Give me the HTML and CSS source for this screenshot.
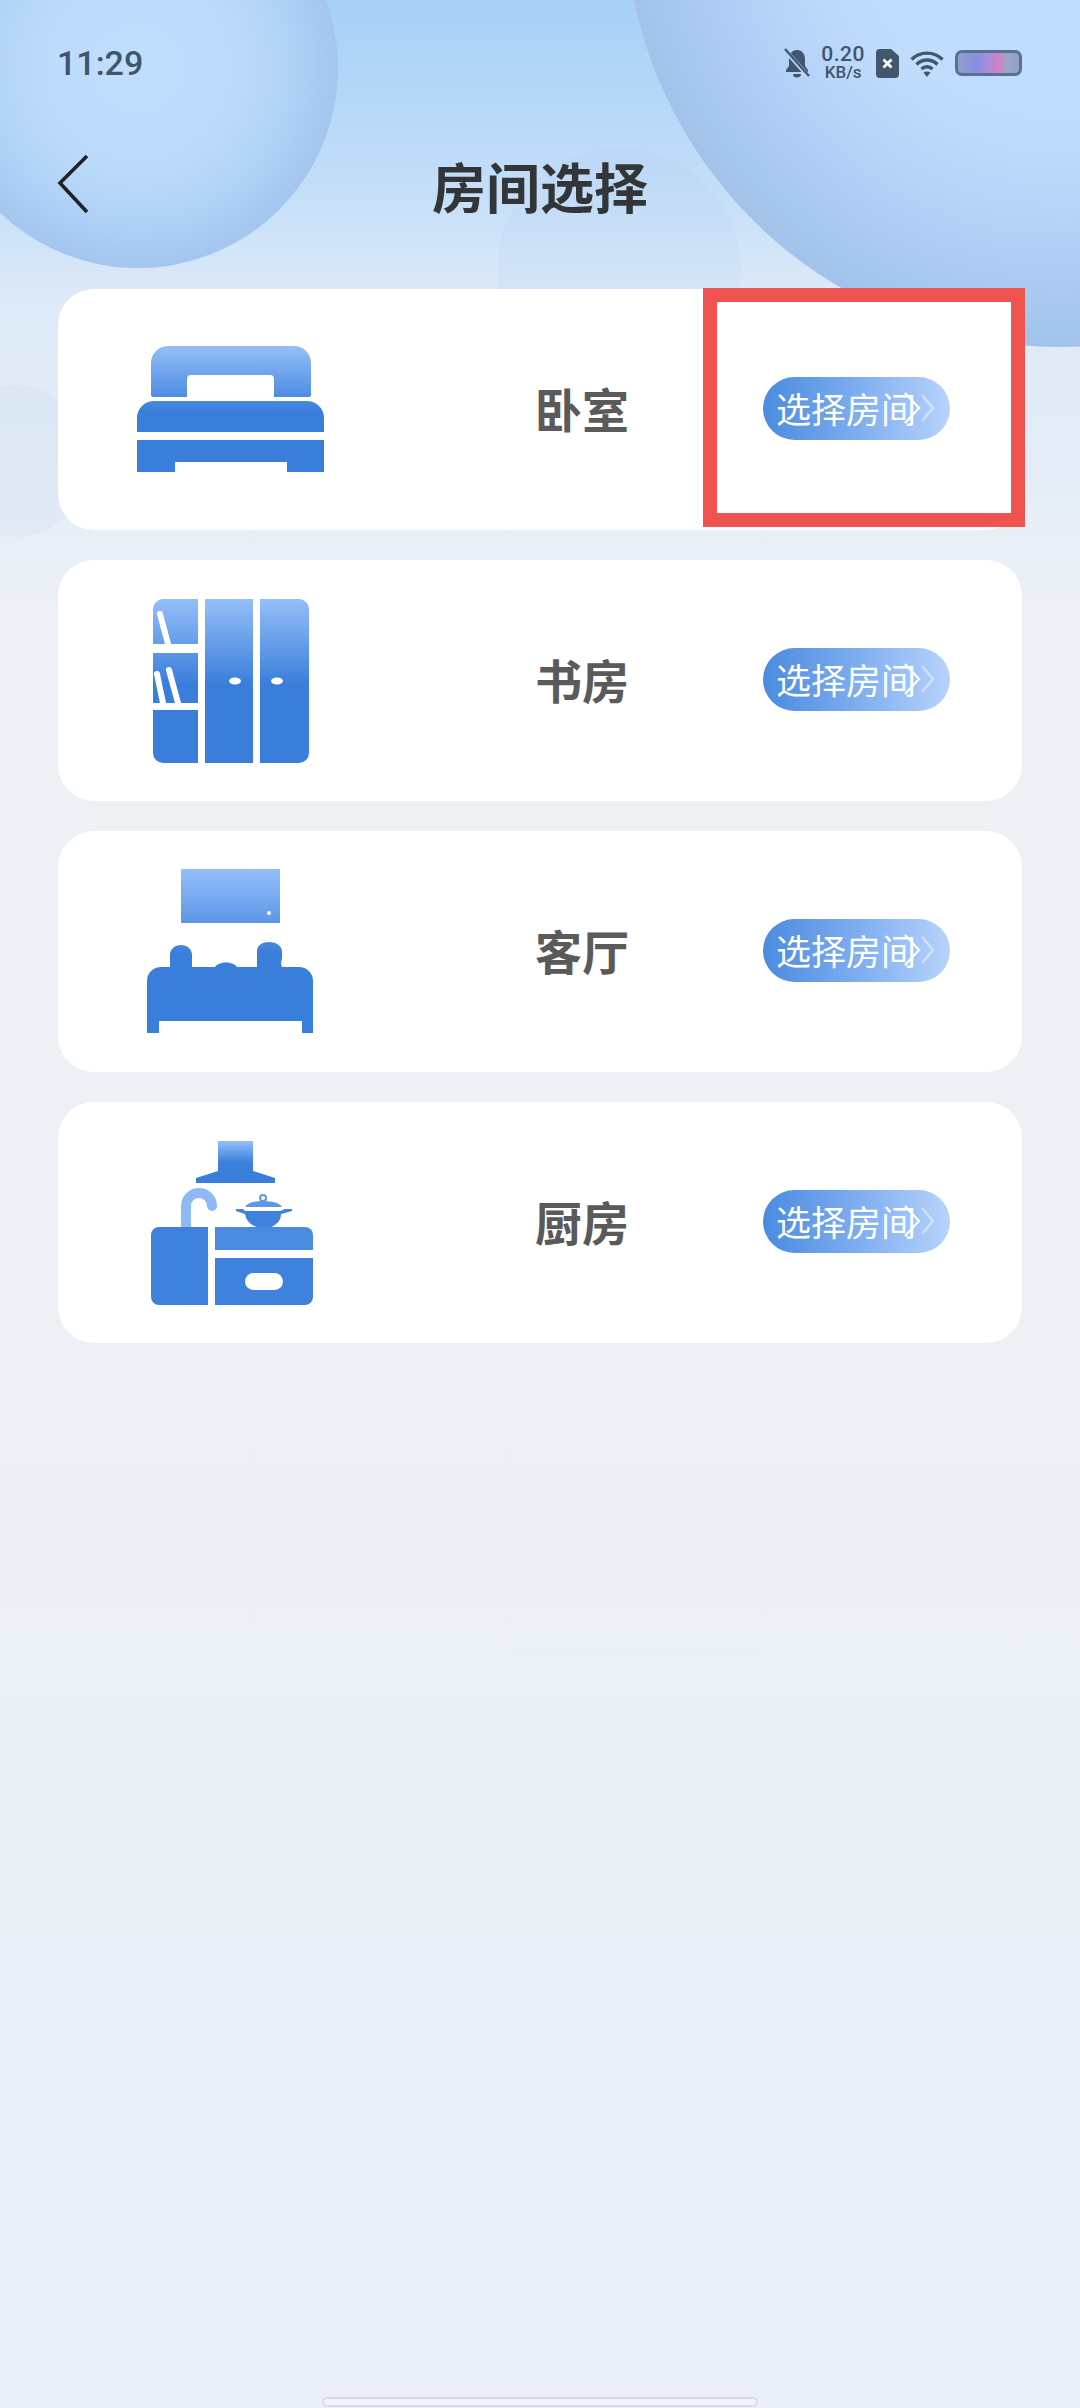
FILE: index.html
```html
<!DOCTYPE html>
<html lang="zh-CN">
<head>
  <meta charset="UTF-8">
  <title>房间选择</title>
  <link rel="stylesheet" href="styles.css">
</head>
<body>
  <div class="phone">
    <div class="bubble bubble-left"></div>
    <div class="bubble bubble-right"></div>
    <div class="bubble bubble-mid"></div>
    <div class="bubble bubble-low"></div>

    <!-- status bar -->
    <div class="status">
      <span class="time">11:29</span>
      <div class="status-icons">
        <svg class="bell" width="27" height="30" viewBox="0 0 27 30">
          <path d="M14 2c-5 0-8 4-8 9v7l-3 4v2h22v-2l-3-4v-7c0-5-3-9-8-9zM10 26a4 3.500 0 0 0 8 0z" fill="#42566e"/>
          <path d="M1 1l25 28" stroke="#b5d3f8" stroke-width="4.500"/>
          <path d="M2 1l24 27" stroke="#42566e" stroke-width="2.400"/>
        </svg>
        <div class="speed"><span class="speed-num">0.20</span><span class="speed-unit">KB/s</span></div>
        <svg class="sim" width="23" height="29" viewBox="0 0 23 29">
          <path d="M4 0h11l8 7v18a4 4 0 0 1-4 4H4a4 4 0 0 1-4-4V4a4 4 0 0 1 4-4z" fill="#42566e"/>
          <path d="M7.500 10.500l8 8M15.500 10.500l-8 8" stroke="#fff" stroke-width="2.800"/>
        </svg>
        <svg class="wifi" width="34" height="27" viewBox="0 0 34 27">
          <path d="M1.500 9.500C10 1 24 1 32.500 9.500M6.500 14.500c6-6 15-6 21 0M11.500 19c3-3 8-3 11 0" fill="none" stroke="#42566e" stroke-width="3.400"/>
          <path d="M13.500 22.500c2-1.500 5-1.500 7 0L17 27z" fill="#42566e"/>
        </svg>
        <div class="battery"></div>
      </div>
    </div>

    <!-- title row -->
    <div class="topbar">
      <svg class="back" width="32" height="60" viewBox="0 0 32 60">
        <path d="M30 2L3 29l27 29" fill="none" stroke="#1f2328" stroke-width="3.600"/>
      </svg>
      <h1 class="title">房间选择</h1>
    </div>

    <div class="room-list">
      <div class="room-card">
        <svg class="room-icon" width="200" height="189" viewBox="0 0 200 189">
          <defs>
            <linearGradient id="iconFill" x1="0" y1="0" x2="0" y2="1">
              <stop offset="0" stop-color="#95bff9"/>
              <stop offset="0.52" stop-color="#3a7edb"/>
            </linearGradient>
          </defs>
          <path fill="url(#iconFill)" d="M21 80V48a17 17 0 0 1 17-17h126a17 17 0 0 1 17 17v32a2 2 0 0 1-2 2h-35V64a4 4 0 0 0-4-4H61a4 4 0 0 0-4 4v18H23a2 2 0 0 1-2-2zM7 117v-14a17 17 0 0 1 17-17h153a17 17 0 0 1 17 17v14zM7 125h187v32h-37v-10H45v10H7z"/>
        </svg>
        <span class="room-name">卧室</span>
        <div class="pick-btn">选择房间
          <svg class="pick-arrow" width="34" height="40" viewBox="0 0 34 40">
            <path d="M2 5l14 15L2 35" fill="none" stroke="#fff" stroke-width="2.200"/>
            <path d="M19 7l11 13-11 13" fill="none" stroke="#fff" stroke-opacity=".45" stroke-width="2.400"/>
          </svg>
        </div>
        <div class="highlight"></div>
      </div>

      <div class="room-card">
        <svg class="room-icon" width="200" height="189" viewBox="0 0 200 189">
          <path fill="url(#iconFill)" d="M23 58V23a10 10 0 0 1 10-10h35v45zM23 67h45v50H23zM23 124h45v53H33a10 10 0 0 1-10-10zM75 13h48v164H75zM130 13h39a10 10 0 0 1 10 10v144a10 10 0 0 1-10 10h-39z"/>
          <path d="M30 28l8 30M27 88l6 29M39 84l9 33" stroke="#fff" stroke-width="6" stroke-linecap="round"/>
          <ellipse cx="105" cy="95" rx="6" ry="3.500" fill="#fff"/>
          <ellipse cx="147" cy="95" rx="6" ry="3.500" fill="#fff"/>
        </svg>
        <span class="room-name">书房</span>
        <div class="pick-btn">选择房间
          <svg class="pick-arrow" width="34" height="40" viewBox="0 0 34 40">
            <path d="M2 5l14 15L2 35" fill="none" stroke="#fff" stroke-width="2.200"/>
            <path d="M19 7l11 13-11 13" fill="none" stroke="#fff" stroke-opacity=".45" stroke-width="2.400"/>
          </svg>
        </div>
      </div>

      <div class="room-card">
        <svg class="room-icon" width="200" height="189" viewBox="0 0 200 189">
          <path fill="url(#iconFill)" d="M51 12h99v54H51zM17 176V124a14 14 0 0 1 14-14h9V98c0-6 5-10 11-10s11 4 11 10v12h23c4-6 18-6 22 0h20V94c0-6 6-9 12-9s13 3 13 10v6l-1 6 1 3h17a14 14 0 0 1 14 14v52h-11v-12H29v12z"/>
          <circle cx="139" cy="56" r="2" fill="#fff"/>
        </svg>
        <span class="room-name">客厅</span>
        <div class="pick-btn">选择房间
          <svg class="pick-arrow" width="34" height="40" viewBox="0 0 34 40">
            <path d="M2 5l14 15L2 35" fill="none" stroke="#fff" stroke-width="2.200"/>
            <path d="M19 7l11 13-11 13" fill="none" stroke="#fff" stroke-opacity=".45" stroke-width="2.400"/>
          </svg>
        </div>
      </div>

      <div class="room-card">
        <svg class="room-icon" width="200" height="189" viewBox="0 0 200 189">
          <path fill="url(#iconFill)" d="M88 13h35v30l22 7v5H66v-5l22-7z"/>
          <path d="M56 100V78a13 13 0 0 1 26 0" fill="none" stroke="#8fb9f3" stroke-width="10" stroke-linecap="round"/>
          <path fill="#3f82dd" d="M21 107a8 8 0 0 1 8-8h49v78H29a8 8 0 0 1-8-8zM85 130h98v39a8 8 0 0 1-8 8H85z"/>
          <path fill="#4a8ae0" d="M85 99h90a8 8 0 0 1 8 8v15H85z"/>
          <rect x="115" y="145" width="38" height="17" rx="8.500" fill="#fff"/>
          <circle cx="133" cy="70" r="3" fill="none" stroke="#5f97e5" stroke-width="2"/>
          <path fill="#5f97e5" d="M115 79c2-4 9-6 18-6s17 2 19 6z"/>
          <path fill="#3f82dd" d="M106 81h7l2 2h35l5-2h7v2l-11 3c0 7-5 11-10 13h-14c-6-2-11-6-12-13l-9-3z"/>
        </svg>
        <span class="room-name">厨房</span>
        <div class="pick-btn">选择房间
          <svg class="pick-arrow" width="34" height="40" viewBox="0 0 34 40">
            <path d="M2 5l14 15L2 35" fill="none" stroke="#fff" stroke-width="2.200"/>
            <path d="M19 7l11 13-11 13" fill="none" stroke="#fff" stroke-opacity=".45" stroke-width="2.400"/>
          </svg>
        </div>
      </div>
    </div>

    <div class="home-bar"></div>
  </div>
</body>
</html>
```

FILE: styles.css
```css
* { box-sizing: border-box; }
body { margin: 0; font-family: "Noto Sans CJK SC", "Noto Sans", sans-serif; }

.phone {
  position: relative;
  width: 1080px;
  height: 2408px;
  overflow: hidden;
  background: linear-gradient(180deg, #a6d0f7 0, #c6dff8 200px, #deeaf8 300px, #e4edf7 480px, #edf1f6 620px, #edf1f6 1300px, #e9eef8 2408px);
}

/* background circles */
.bubble { position: absolute; border-radius: 50%; }
.bubble-left {
  left: -62px; top: -132px; width: 400px; height: 400px;
  background: radial-gradient(circle 200px at 50% 50%, #c0defc 0, #bcdbfb 50%, #b0d1f7 78%, #a3c5ee 100%);
}
.bubble-right {
  left: 625px; top: -523px; width: 870px; height: 870px;
  background: radial-gradient(circle 435px at 50% 50%, #c1defe 0, #bfdcfd 52%, #b2d0f7 76%, #a2c2ea 100%);
}
.bubble-mid {
  left: 497px; top: 148px; width: 244px; height: 244px;
  background: rgba(178, 208, 240, .16);
}
.bubble-low {
  left: -60px; top: 385px; width: 150px; height: 152px;
  background: rgba(205, 220, 240, .22);
}

.status {
  position: relative;
  height: 126px;
  padding: 0 58px 0 57px;
  display: flex;
  align-items: center;
  justify-content: space-between;
  color: #40546c;
}
.time { font-family: Roboto, sans-serif; font-size: 34px; font-weight: 500; }
.status-icons { display: flex; align-items: center; }
.speed { display: flex; flex-direction: column; align-items: center; margin: 0 11px 0 11px; font-family: Roboto, sans-serif; font-weight: 500; }
.speed-num { font-size: 21px; line-height: 19px; letter-spacing: .5px; }
.speed-unit { font-size: 17px; line-height: 17px; }
.wifi { margin: 0 11px; }
.battery {
  width: 67px;
  height: 26px;
  border: 3px solid #5b6f90;
  border-radius: 7px;
  background: linear-gradient(90deg, #8c9fcb 0, #8b8fe0 30%, #a28fd8 48%, #d77fc4 66%, #9aa5cc 80%, #8fa2c6 100%);
}

.topbar {
  position: relative;
  height: 122px;
  display: flex;
  align-items: center;
  justify-content: center;
}
.back { position: absolute; left: 57px; top: 28px; }
.title { margin: 0 0 3px; font-size: 54px; font-weight: 700; line-height: 76px; color: #333639; }

.room-list {
  position: relative;
  margin: 41px 58px 0;
  display: flex;
  flex-direction: column;
  gap: 30px;
}
.room-card {
  position: relative;
  height: 241px;
  padding-left: 72px;
  display: flex;
  align-items: center;
  background: #fff;
  border-radius: 36px;
}
.room-icon { flex: none; }
.room-name { margin: 0 0 5px 205px; font-size: 47px; font-weight: 700; color: #5a5a5a; }

.pick-btn {
  position: absolute;
  left: 705px;
  top: 88px;
  width: 187px;
  height: 63px;
  padding-left: 13px;
  border-radius: 32px;
  background: linear-gradient(90deg, #4a8bdf 0, #78a9ee 45%, #b7d3fb 100%);
  color: #fff;
  font-size: 35px;
  line-height: 62px;
  white-space: nowrap;
}
.pick-arrow { position: absolute; left: 140px; top: 11px; }

/* red marker drawn over the first card */
.highlight {
  position: absolute;
  left: 645px;
  top: -1px;
  width: 322px;
  height: 239px;
  border: 14px solid #ef5350;
}

.home-bar {
  position: absolute;
  left: 322px;
  bottom: 1px;
  width: 436px;
  height: 10px;
  border: 2px solid #d6dbe7;
  border-radius: 5px;
  background: #f1f3fa;
}
```
